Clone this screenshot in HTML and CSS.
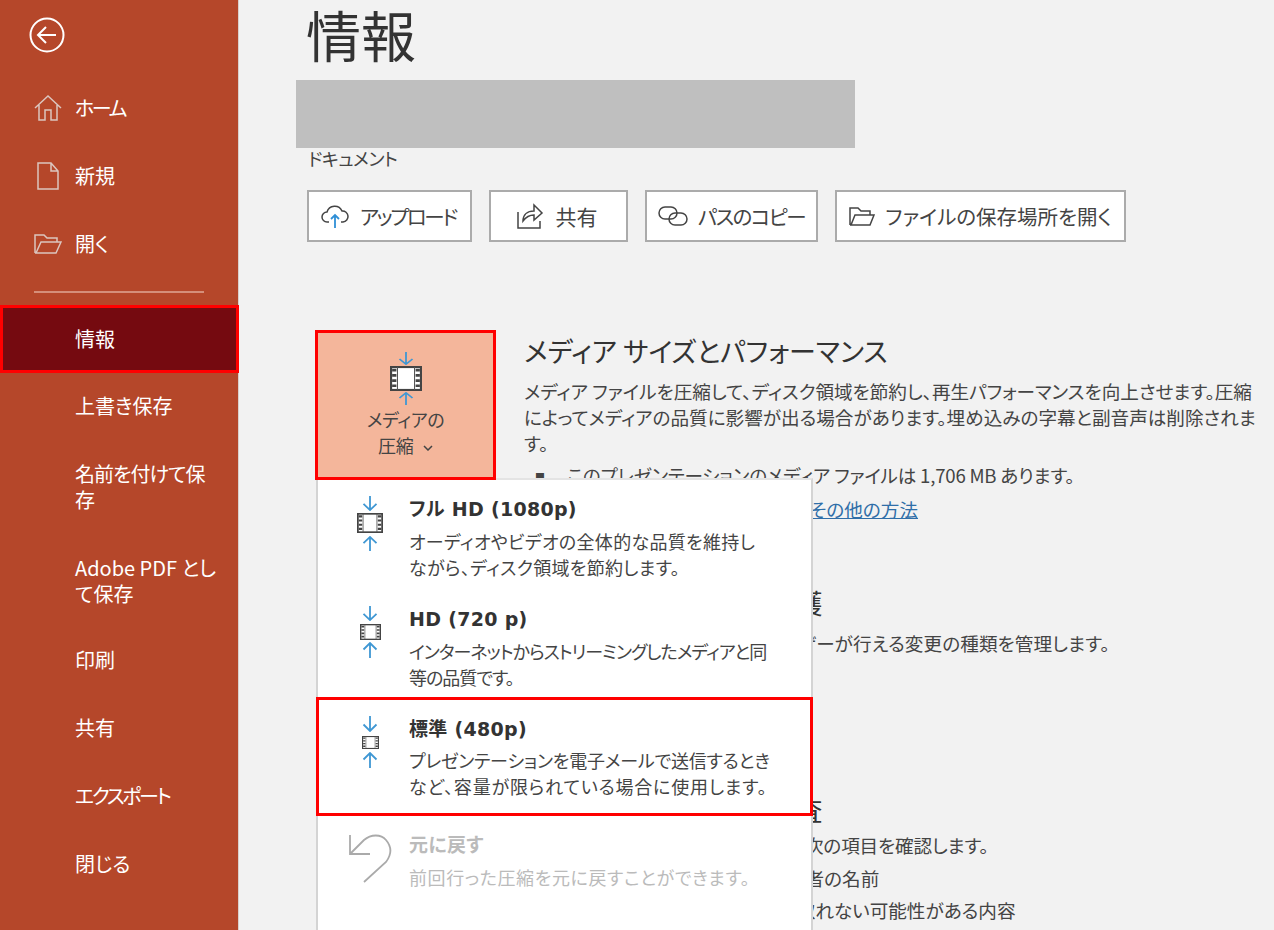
FILE: index.html
```html
<!DOCTYPE html>
<html lang="ja">
<head>
    <meta charset="UTF-8">
    <title>情報</title>
    <link rel="stylesheet" href="styles.css">
</head>
<body>
    <!-- Shared icon: film frame -->
    <svg class="defs" width="0" height="0">
        <symbol id="film" viewBox="0 0 30 24" preserveAspectRatio="none">
            <rect x="1" y="1" width="28" height="22" fill="#fff" stroke="#444" stroke-width="2"/>
            <path d="M7 1v22M23 1v22" stroke="#555" stroke-width="1"/>
            <path d="M2 4h4M2 9h4M2 14h4M2 19h4M24 4h4M24 9h4M24 14h4M24 19h4" stroke="#444" stroke-width="2.500"/>
        </symbol>
        <symbol id="arrow-down" viewBox="0 0 16 16" preserveAspectRatio="none">
            <path d="M8 0v15M1.500 8.500L8 15l6.500-6.500" fill="none" stroke="#3f97d3" stroke-width="1.800"/>
        </symbol>
        <symbol id="arrow-up" viewBox="0 0 16 16" preserveAspectRatio="none">
            <path d="M8 16V1M1.500 7.500L8 1l6.500 6.500" fill="none" stroke="#3f97d3" stroke-width="1.800"/>
        </symbol>
    </svg>

    <!-- Sidebar -->
    <nav class="sidebar">
        <div class="back">
            <svg width="36" height="36" viewBox="0 0 36 36" fill="none" stroke="#fff" stroke-width="2">
                <circle cx="18" cy="18" r="16.5"/>
                <path d="M27 18H9M17 10l-8 8 8 8"/>
            </svg>
        </div>
        <ul class="nav-list">
            <li class="nav-item kana">
                <svg class="nav-icon" width="28" height="28" viewBox="0 0 28 28" fill="none" stroke="#dcc6bf" stroke-width="1.5">
                    <path d="M1 14L14 2l13 12M5 11v15h6V16h6v10h6V11"/>
                </svg>
                ホーム
            </li>
            <li class="nav-item">
                <svg class="nav-icon" width="28" height="28" viewBox="0 0 28 28" fill="none" stroke="#dcc6bf" stroke-width="1.5">
                    <path d="M4 1h13l7 8v18H4zM17 1v8h7"/>
                </svg>
                新規
            </li>
            <li class="nav-item">
                <svg class="nav-icon" width="28" height="28" viewBox="0 0 28 28" fill="none" stroke="#dcc6bf" stroke-width="1.5">
                    <path d="M1 23V5h9l3 3h10v4M1 23h21l5-11H7L2 23"/>
                </svg>
                開く
            </li>
            <li class="nav-divider"></li>
            <li class="nav-item selected">情報</li>
            <li class="nav-item">上書き保存</li>
            <li class="nav-item tall name-save">名前を付けて保存</li>
            <li class="nav-item tall pdf-save">Adobe PDF として保存</li>
            <li class="nav-item">印刷</li>
            <li class="nav-item">共有</li>
            <li class="nav-item kana">エクスポート</li>
            <li class="nav-item">閉じる</li>
        </ul>
    </nav>

    <!-- Main content -->
    <main class="content">
        <h1>情報</h1>
        <div class="filename-mask"></div>
        <div class="path">ドキュメント</div>

        <div class="actions">
            <button class="action w-upload">
                <svg width="30" height="26" viewBox="0 0 30 26" fill="none" stroke="#444" stroke-width="1.5">
                    <path d="M9 19H7a5 5 0 0 1 0-10 8 8 0 0 1 15-1 5.500 5.500 0 0 1 1 11h-2"/>
                    <path d="M15 25V12M11 16l4-4 4 4" stroke="#2f8fd6" stroke-width="1.8"/>
                </svg>
                <span class="kana">アップロード</span>
            </button>
            <button class="action w-share">
                <svg width="28" height="28" viewBox="0 0 28 28" fill="none" stroke="#444" stroke-width="1.5">
                    <path d="M2 10v16h22v-7M7 19c0-6 4-10 11-10V3l8 8-8 7v-5c-5 0-8 2-11 6z"/>
                </svg>
                共有
            </button>
            <button class="action w-copy">
                <svg width="30" height="20" viewBox="0 0 30 20" fill="none" stroke="#444" stroke-width="1.5">
                    <rect x="1" y="1" width="18" height="12" rx="6"/>
                    <rect x="11" y="7" width="18" height="12" rx="6"/>
                </svg>
                <span class="kana-light">パスのコピー</span>
            </button>
            <button class="action w-open">
                <svg width="26" height="22" viewBox="0 0 26 22" fill="none" stroke="#444" stroke-width="1.5">
                    <path d="M1 20V3h8l3 3h9v4M1 20h20l4-10H6L2 20"/>
                </svg>
                ファイルの保存場所を開く
            </button>
        </div>

        <section class="media">
            <div class="tile">
                <svg class="tile-arrow" width="16" height="13"><use href="#arrow-down"/></svg>
                <svg class="tile-film" width="32" height="25"><use href="#film"/></svg>
                <svg class="tile-arrow" width="16" height="13"><use href="#arrow-up"/></svg>
                <div class="tile-label">メディアの<br>圧縮
                    <svg class="chevron" width="10" height="6" viewBox="0 0 10 6" fill="none" stroke="#444" stroke-width="1.500">
                        <path d="M1 1l4 4 4-4"/>
                    </svg>
                </div>
            </div>
            <div class="info">
                <h2>メディア サイズとパフォーマンス</h2>
                <p>メディア ファイルを圧縮して、ディスク領域を節約し、再生パフォーマンスを向上させます。圧縮によってメディアの品質に影響が出る場合があります。埋め込みの字幕と副音声は削除されます。</p>
                <p class="bullet"><span class="mark">■</span>このプレゼンテーションのメディア ファイルは 1,706 MB あります。</p>
                <p class="more"><a href="#">パフォーマンスの向上のためのその他の方法</a></p>
            </div>
        </section>

        <section class="info lower protect">
            <h2>プレゼンテーションの保護</h2>
            <p>このプレゼンテーションに対しユーザーが行える変更の種類を管理します。</p>
        </section>

        <section class="info lower inspect">
            <h2>プレゼンテーションの検査</h2>
            <p class="lead">プレゼンテーションを公開する前に、次の項目を確認します。</p>
            <p class="sub">ドキュメント プロパティと作成者の名前</p>
            <p class="sub sub-long">視覚に障がいのある方が読み取れない可能性がある内容</p>
        </section>

        <!-- Compress media dropdown -->
        <div class="menu">
            <div class="menu-item">
                <div class="menu-icon">
                    <svg width="16" height="15"><use href="#arrow-down"/></svg>
                    <svg class="film-full" width="26" height="20"><use href="#film"/></svg>
                    <svg width="16" height="15"><use href="#arrow-up"/></svg>
                </div>
                <div>
                    <div class="menu-title">フル HD (1080p)</div>
                    <div class="menu-desc loose">オーディオやビデオの全体的な品質を維持し<br>ながら、ディスク領域を節約します。</div>
                </div>
            </div>
            <div class="menu-item">
                <div class="menu-icon">
                    <svg width="16" height="15"><use href="#arrow-down"/></svg>
                    <svg class="film-mid" width="21" height="16"><use href="#film"/></svg>
                    <svg width="16" height="16"><use href="#arrow-up"/></svg>
                </div>
                <div>
                    <div class="menu-title">HD (720 p)</div>
                    <div class="menu-desc tight">インターネットからストリーミングしたメディアと同<br>等の品質です。</div>
                </div>
            </div>
            <div class="menu-item picked">
                <div class="menu-icon">
                    <svg width="16" height="16"><use href="#arrow-down"/></svg>
                    <svg class="film-small" width="17" height="13"><use href="#film"/></svg>
                    <svg width="16" height="16"><use href="#arrow-up"/></svg>
                </div>
                <div>
                    <div class="menu-title">標準 (480p)</div>
                    <div class="menu-desc slim">プレゼンテーションを電子メールで送信するとき<br><span class="wide">など、容量が限られている場合に使用します。</span></div>
                </div>
            </div>
            <div class="menu-item disabled">
                <div class="menu-icon">
                    <svg class="undo" width="43" height="49" viewBox="0 0 43 49" fill="none" stroke="#aaa" stroke-width="1.800">
                        <path d="M1 1v19h20M1 20L15 6c7-6 17-6 22 0 6 7 6 14 0 22L15 48"/>
                    </svg>
                </div>
                <div>
                    <div class="menu-title">元に戻す</div>
                    <div class="menu-desc wide-light">前回行った圧縮を元に戻すことができます。</div>
                </div>
            </div>
        </div>
    </main>
</body>
</html>
```

FILE: styles.css
```css
/* Page */
html, body {
    height: 930px;
    overflow: hidden;
}

body {
    display: flex;
    margin: 0;
    background-color: #f2f2f2;
    color: #444;
    font-family: "Noto Sans CJK JP", "Noto Sans", sans-serif;
    font-feature-settings: "palt";
}

.defs {
    position: absolute;
}

/* Sidebar */
.sidebar {
    flex: none;
    width: 238px;
    height: 930px;
    background-color: #b5472a;
    border-right: 1px solid #d9d0cd;
    color: #fff;
}

.back {
    display: flex;
    height: 70px;
    padding: 17px 0 0 29px;
    box-sizing: border-box;
}

.nav-list {
    list-style: none;
    margin: 4px 0 0;
    padding: 0;
}

.nav-item {
    display: flex;
    align-items: center;
    height: 68px;
    padding: 0 20px 0 75px;
    position: relative;
    font-size: 20px;
    line-height: 26px;
    box-sizing: border-box;
}

.nav-item.kana {
    letter-spacing: -2.4px;
}

.nav-icon {
    position: absolute;
    left: 34px;
    top: 20px;
}

.nav-divider {
    height: 2px;
    margin: 13px 34px 12px;
    background-color: #d58f7a;
}

.nav-item.tall {
    height: 94px;
}

.name-save {
    letter-spacing: -1px;
}

.nav-item.pdf-save {
    height: 92px;
    padding-top: 2px;
}

.nav-item.selected {
    width: 239px;
    margin-bottom: -1px;
    padding-left: 72px;
    border: 3px solid #f00;
    background-color: #750a10;
}

/* Main */
.content {
    flex: 1;
    position: relative;
    padding: 0 0 0 57px;
}

h1 {
    margin: 0;
    padding-left: 10px;
    height: 80px;
    font-size: 55px;
    line-height: 66px;
    font-weight: 400;
    color: #333;
}

.filename-mask {
    width: 559px;
    height: 68px;
    background-color: #bfbfbf;
}

.path {
    padding-left: 12px;
    font-size: 18px;
    line-height: 20px;
    letter-spacing: -0.4px;
    color: #444;
}

.actions {
    display: flex;
    gap: 17px;
    margin: 22px 0 0 11px;
}

.action {
    display: flex;
    align-items: center;
    justify-content: center;
    gap: 10px;
    height: 52px;
    padding: 0;
    background-color: #fff;
    border: 2px solid #ababab;
    color: #444;
    font-family: inherit;
    font-feature-settings: inherit;
    font-size: 20.5px;
}

.kana {
    letter-spacing: -2.4px;
}

.kana-light {
    letter-spacing: -1.5px;
}

.w-upload { width: 165px; padding-right: 3px; }
.w-share { width: 139px; padding-right: 4px; gap: 12px; font-size: 21px; }
.w-copy { width: 173px; }
.w-open { width: 291px; }

/* Media section */
.media {
    display: flex;
    margin: 88px 0 0 19px;
}

.tile {
    flex: none;
    display: flex;
    flex-direction: column;
    align-items: center;
    position: relative;
    z-index: 1;
    width: 181px;
    height: 150px;
    padding-top: 19px;
    background-color: #f4b69b;
    border: 3px solid #f00;
    box-sizing: border-box;
}

.tile-film {
    margin: 1px 0;
}

.tile-label {
    margin-top: 1px;
    text-align: center;
    font-size: 18px;
    line-height: 26px;
    letter-spacing: -0.4px;
}

.chevron {
    margin-left: 6px;
    vertical-align: 2px;
}

.info {
    margin-left: 28px;
    width: 736px;
}

.info h2 {
    margin: -1px 0 5px;
    font-size: 27px;
    line-height: 44px;
    font-weight: 400;
    color: #333;
}

.info p {
    margin: 0;
    font-size: 18.6px;
    line-height: 26px;
}

.info .bullet {
    margin-top: 6px;
    letter-spacing: -0.2px;
}

.mark {
    display: inline-block;
    width: 43px;
    padding-left: 11px;
    box-sizing: border-box;
    font-size: 10px;
    vertical-align: 2px;
}

.info .more {
    margin-top: 6px;
    padding-left: 43px;
}

.more a {
    color: #2f6ea8;
}

.lower {
    margin-left: 228px;
}

.protect {
    margin-top: 60px;
}

.protect p {
    letter-spacing: 0.1px;
}

.inspect {
    margin-top: 133px;
}

.inspect h2 {
    margin-bottom: -3px;
}

.info.inspect p {
    line-height: 32.5px;
}

.info .lead {
    letter-spacing: -0.15px;
}

.inspect .sub {
    padding-left: 46px;
}

.inspect .sub-long {
    padding-left: 37px;
}

/* Dropdown menu */
.menu {
    position: absolute;
    left: 77px;
    top: 478px;
    width: 497px;
    height: 460px;
    background-color: #fff;
    border-left: 2px solid #d4d4d4;
    border-right: 2px solid #d4d4d4;
    border-top: 2px solid #e4e4e4;
    box-sizing: border-box;
}

.menu-item {
    display: flex;
    height: 110px;
    padding: 15px 20px 0 30px;
    box-sizing: border-box;
}

.menu-item.picked {
    height: 119px;
    margin: -3px -2px 0;
    padding: 15px 20px 0 29px;
    border: 3px solid #f00;
}

.menu-icon {
    flex: none;
    display: flex;
    flex-direction: column;
    align-items: center;
    width: 44px;
    margin-right: 17px;
    padding-top: 1px;
}

.film-full { margin: 2px 0 3px; }
.film-mid { margin: 3px 0 2px; }
.film-small { margin: 4px 0 3px; }
.undo { margin-top: 2px; }

.menu-title {
    font-family: "DejaVu Sans", "Noto Sans CJK JP", sans-serif;
    font-size: 19px;
    line-height: 28px;
    font-weight: 700;
    letter-spacing: 0.3px;
    color: #333;
}

.menu-desc {
    margin-top: 5px;
    font-size: 18px;
    line-height: 26px;
    color: #444;
}

.menu-desc.loose {
    letter-spacing: 0.3px;
}

.menu-desc.tight {
    letter-spacing: -1px;
}

.menu-desc.slim {
    margin-top: 4px;
    letter-spacing: -0.2px;
}

.wide {
    letter-spacing: 0.8px;
}

.menu-desc.wide-light {
    letter-spacing: 0.6px;
}

.disabled .menu-title, .disabled .menu-desc {
    color: #bbb;
}
```
